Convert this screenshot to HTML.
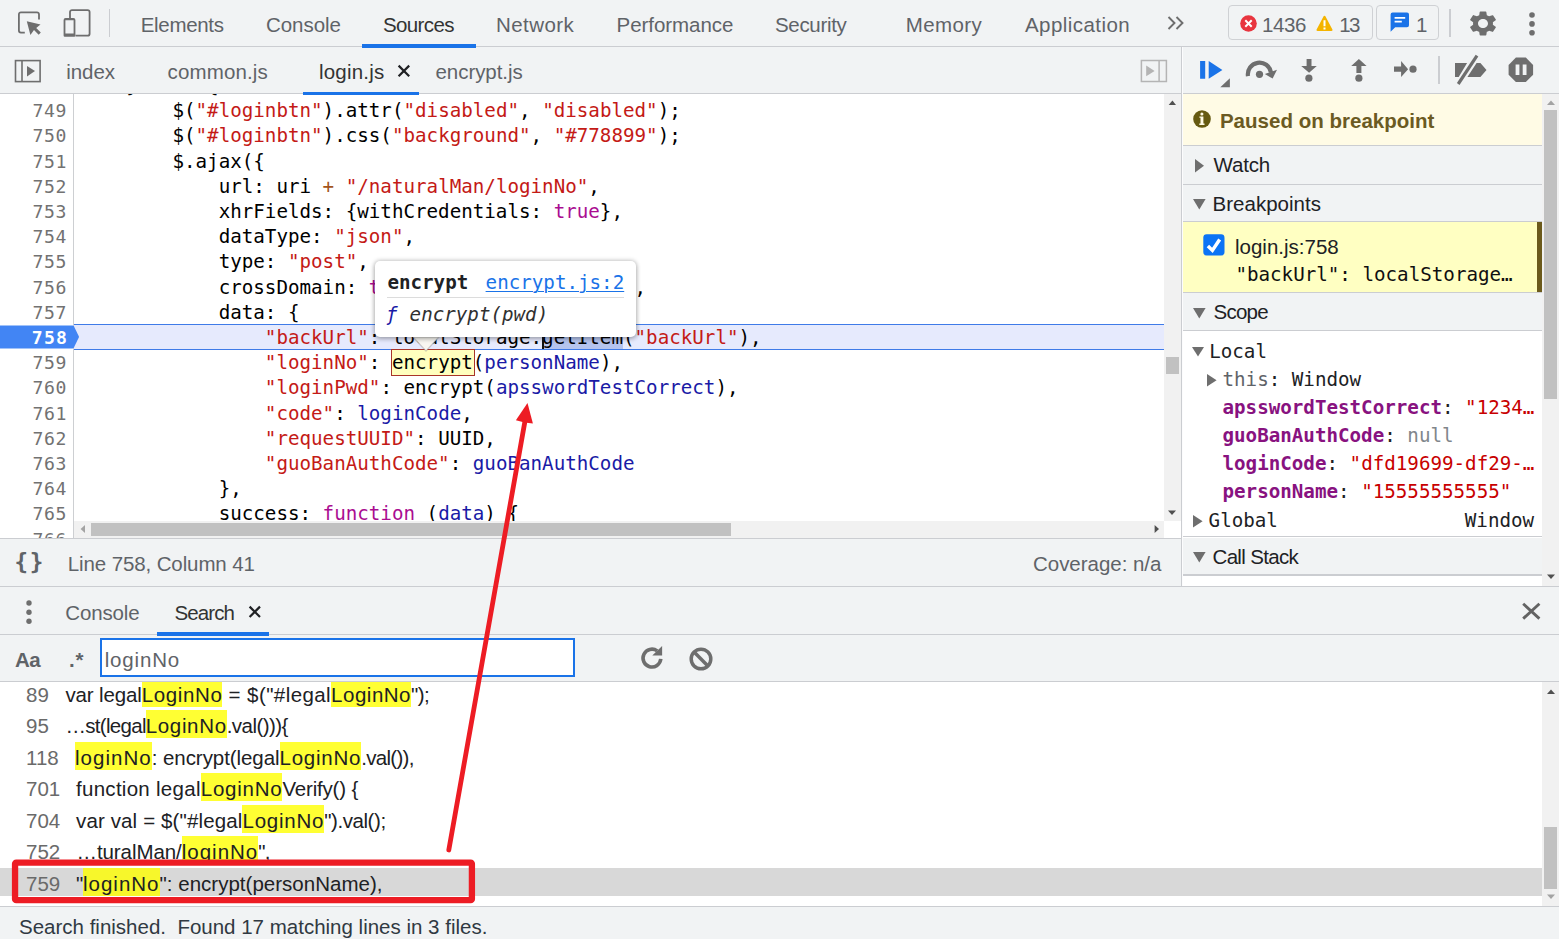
<!DOCTYPE html>
<html lang="en">
<head>
<meta charset="utf-8">
<title>DevTools - Sources</title>
<style>
*{box-sizing:border-box;margin:0;padding:0}
html,body{width:1559px;height:939px;overflow:hidden;background:#fff}
body{position:relative;font-family:"Liberation Sans","DejaVu Sans",sans-serif;font-size:20.5px;color:#303942;-webkit-font-smoothing:antialiased}
.abs{position:absolute}
.bar{position:absolute;background:#f1f3f4}
.hl{position:absolute;background:#cbcdd1}
.t{position:absolute;white-space:pre;line-height:24px;height:24px}
.mono{font-family:"DejaVu Sans Mono","Liberation Mono",monospace;font-size:19.19px}
svg{position:absolute;overflow:visible}

/* ---------- top toolbar ---------- */
#top{left:0;top:0;width:1559px;height:46px}
#top .t{top:12.9px;color:#5f6368}
#top .sel{color:#333}
.uline{position:absolute;background:#1a73e8;height:3.4px;z-index:5}
.badge{position:absolute;top:5px;height:35px;border:1px solid #cfd1d4;border-radius:4px;background:#f1f3f4}

/* ---------- file tabs ---------- */
#ftabs{left:0;top:47px;width:1181px;height:46px}
#ftabs .t{top:13.3px;color:#5f6368}
#ftabs .sel{color:#333}

/* ---------- debugger toolbar ---------- */
#dbg{left:1182px;top:47px;width:377px;height:46px}

/* ---------- code ---------- */
#code{position:absolute;left:0;top:94px;width:1164px;height:444px;background:#fff;overflow:hidden}
#gutter{position:absolute;left:0;top:0;width:74px;height:444px;background:#fff;border-right:1px solid #cdcfd2;z-index:3}
.ln{position:absolute;left:0;width:67.1px;font-size:18.1px;letter-spacing:.66px;text-align:right;color:#727272;height:25.2px;line-height:25.2px;white-space:pre}
.cl{position:absolute;left:33.8px;height:25.2px;line-height:25.2px;white-space:pre;color:#000}
.s{color:#c41a16}#side .s{color:#c80000}.k{color:#aa0d91}.v{color:#1a1aa6}.o{color:#a3541c}

.selx{background:linear-gradient(#b5c4ee,#b5c4ee) no-repeat 0 2px/100% 21px}
.hov{background:#ffffbe;outline:1.2px solid #a9352a;outline-offset:-1px;padding:2.2px 2.6px 1.5px .6px;margin:0 -2.6px 0 -.6px}
/* ---------- sidebar ---------- */
#side{position:absolute;left:1182px;top:94px;width:360px;height:492px;background:#fff;overflow:hidden}
.sec{position:absolute;left:0;width:360px;background:#f1f3f4;border-bottom:1px solid #cbcdd1}
.sec .t{left:31.5px;color:#202124}
.sc{position:absolute;white-space:pre;height:28px;line-height:28px}
.pn{color:#881280;font-weight:bold}

/* ---------- drawer ---------- */
.row{position:absolute;left:0;width:1542px;height:28px;line-height:28px;white-space:pre;color:#202124;overflow:hidden}
.row .n{position:absolute;left:0;top:1.8px;color:#6a6a6a}
.row .c{position:absolute;top:0}
.row .c span,.row mark{position:relative}
.row .c>*{line-height:31.6px}
mark{background:rgba(255,255,0,.8);color:inherit;display:inline-block;height:28px;vertical-align:top}
</style>
</head>
<body>

<!-- ======================= TOP TOOLBAR ======================= -->
<div class="bar" id="top">
  <!-- inspect element icon -->
  <svg width="30" height="30" viewBox="0 0 30 30" style="left:14px;top:8px">
    <path d="M25 11.5V6.4a2 2 0 0 0-2-2H6.9a2 2 0 0 0-2 2v16.2a2 2 0 0 0 2 2h3.9" fill="none" stroke="#6e6e6e" stroke-width="1.8"/>
    <path d="M12.8 13.2l13.7 3.3-4.3 3.4 4.6 4.7-2.1 2.2-4.7-4.8-3.6 4.9z" fill="#6e6e6e"/>
  </svg>
  <!-- device toolbar icon -->
  <svg width="30" height="30" viewBox="0 0 30 30" style="left:61px;top:8px">
    <path d="M9 10V4.1a2 2 0 0 1 2-2h15.6a2 2 0 0 1 2 2v21.6a2 2 0 0 1-2 2H14.5" fill="none" stroke="#6e6e6e" stroke-width="1.8"/>
    <path d="M4.6 10h7.8a2 2 0 0 1 2 2v15.5a1.2 1.2 0 0 1-1.2 1.2H3.8a1.2 1.2 0 0 1-1.2-1.2V12a2 2 0 0 1 2-2zM4.4 12.2v13.2h8.2V12.2z" fill="#6e6e6e" fill-rule="evenodd"/>
  </svg>
  <div class="abs" style="left:109px;top:9px;width:1px;height:28px;background:#cbcdd1"></div>

  <span class="t" style="left:140.75px;letter-spacing:-.315px">Elements</span>
  <span class="t" style="left:266px;letter-spacing:-.05px">Console</span>
  <span class="t sel" style="left:383px;letter-spacing:-.617px">Sources</span>
  <span class="t" style="left:496px;letter-spacing:.428px">Network</span>
  <span class="t" style="left:616.5px;letter-spacing:-.045px">Performance</span>
  <span class="t" style="left:775px;letter-spacing:-.329px">Security</span>
  <span class="t" style="left:905.75px;letter-spacing:.394px">Memory</span>
  <span class="t" style="left:1025px;letter-spacing:.436px">Application</span>
  <div class="uline" style="left:362px;top:44.2px;width:114.3px"></div>

  <!-- more tabs chevron -->
  <svg width="18" height="14" viewBox="0 0 18 14" style="left:1167px;top:16px">
    <path d="M1.5 1l6 6-6 6M9.5 1l6 6-6 6" fill="none" stroke="#6e6e6e" stroke-width="1.9"/>
  </svg>

  <!-- errors / warnings -->
  <div class="badge" style="left:1228px;width:145px"></div>
  <svg width="17" height="17" viewBox="0 0 17 17" style="left:1239.5px;top:14.5px">
    <circle cx="8.5" cy="8.5" r="8.3" fill="#e8353f"/>
    <path d="M5.3 5.3l6.4 6.4M11.7 5.3l-6.4 6.4" stroke="#fff" stroke-width="2" fill="none"/>
  </svg>
  <span class="t" style="left:1262.1px;letter-spacing:-.4px">1436</span>
  <svg width="17" height="17" viewBox="0 0 17 17" style="left:1316.3px;top:14.5px">
    <path d="M8.5 .8a1 1 0 0 1 .9.5l7 13.2a1 1 0 0 1-.9 1.5h-14a1 1 0 0 1-.9-1.5l7-13.2a1 1 0 0 1 .9-.5z" fill="#f4b400"/>
    <path d="M7.5 5.2h2v6h-2zM7.5 12.4h2v2h-2z" fill="#fff"/>
  </svg>
  <span class="t" style="left:1339.3px;letter-spacing:-1.8px">13</span>

  <!-- issues -->
  <div class="badge" style="left:1376px;width:63px"></div>
  <svg width="20" height="21" viewBox="0 0 20 21" style="left:1389.5px;top:12px">
    <path d="M2.6 .6h14.4a2 2 0 0 1 2 2v10.6a2 2 0 0 1-2 2H5.2L.6 19.8V2.6a2 2 0 0 1 2-2z" fill="#1a73e8"/>
    <path d="M4.6 5h10.6v1.8H4.6zM4.6 8.8h7.2v1.8H4.6z" fill="#fff"/>
  </svg>
  <span class="t" style="left:1415.9px">1</span>

  <div class="abs" style="left:1449px;top:9px;width:2px;height:28px;background:#cbcdd1"></div>
  <!-- settings gear -->
  <svg width="26" height="25" viewBox="2.6 2 18.8 20" preserveAspectRatio="none" style="left:1469.9px;top:10.6px">
    <path fill="#6e6e6e" d="M19.14 12.94c.04-.3.06-.61.06-.94 0-.32-.02-.64-.07-.94l2.03-1.58c.18-.14.23-.41.12-.61l-1.92-3.32c-.12-.22-.37-.29-.59-.22l-2.39.96c-.5-.38-1.03-.7-1.62-.94l-.36-2.54c-.04-.24-.24-.41-.48-.41h-3.84c-.24 0-.43.17-.47.41l-.36 2.54c-.59.24-1.13.57-1.62.94l-2.39-.96c-.22-.08-.47 0-.59.22L2.74 8.87c-.12.21-.08.47.12.61l2.03 1.58c-.05.3-.09.63-.09.94s.02.64.07.94l-2.03 1.58c-.18.14-.23.41-.12.61l1.92 3.32c.12.22.37.29.59.22l2.39-.96c.5.38 1.03.7 1.62.94l.36 2.54c.05.24.24.41.48.41h3.84c.24 0 .44-.17.47-.41l.36-2.54c.59-.24 1.13-.56 1.62-.94l2.39.96c.22.08.47 0 .59-.22l1.92-3.32c.12-.22.07-.47-.12-.61l-2.01-1.58zM12 15.6c-1.98 0-3.6-1.62-3.6-3.6s1.62-3.6 3.6-3.6 3.6 1.62 3.6 3.6-1.62 3.6-3.6 3.6z"/>
  </svg>
  <!-- kebab -->
  <svg width="8" height="26" viewBox="0 0 8 26" style="left:1528.4px;top:11px">
    <circle cx="4" cy="4" r="2.8" fill="#6e6e6e"/><circle cx="4" cy="12.9" r="2.8" fill="#6e6e6e"/><circle cx="4" cy="21.7" r="2.8" fill="#6e6e6e"/>
  </svg>
</div>
<div class="hl" style="left:0;top:46px;width:1559px;height:1px"></div>

<!-- ======================= FILE TABS ======================= -->
<div class="bar" id="ftabs">
  <!-- show navigator -->
  <svg width="28" height="24" viewBox="0 0 28 24" style="left:14px;top:11.6px">
    <rect x="1.5" y="1.6" width="24.6" height="21" fill="none" stroke="#6e6e6e" stroke-width="1.6"/>
    <path d="M8 1.6v21" stroke="#6e6e6e" stroke-width="1.6"/>
    <path d="M13 6.9l8 5.2-8 5.3z" fill="#6e6e6e"/>
  </svg>
  <span class="t" style="left:66.3px;letter-spacing:-.064px">index</span>
  <span class="t" style="left:167.5px;letter-spacing:.143px">common.js</span>
  <span class="t sel" style="left:319px;letter-spacing:.205px">login.js</span>
  <svg width="14" height="14" viewBox="0 0 14 14" style="left:397px;top:16.5px">
    <path d="M1.6 1.6l10.6 10.6M12.2 1.6L1.6 12.2" stroke="#202124" stroke-width="2.2" fill="none"/>
  </svg>
  <span class="t" style="left:435.5px;letter-spacing:-.053px">encrypt.js</span>
  <div class="uline" style="left:302.5px;top:44.6px;width:116.5px"></div>
  <!-- show debugger (collapsed) -->
  <svg width="28" height="24" viewBox="0 0 28 24" style="left:1140.2px;top:11.7px">
    <rect x="1.4" y="1.5" width="25" height="21" fill="none" stroke="#b4b4b4" stroke-width="1.5"/>
    <path d="M19.1 1.5v21" stroke="#b4b4b4" stroke-width="1.5"/>
    <path d="M6.2 6.5l8.4 5.4-8.4 5.3z" fill="#b4b4b4"/>
  </svg>
</div>
<div class="hl" style="left:0;top:93px;width:1559px;height:1px"></div>

<!-- ======================= DEBUGGER TOOLBAR ======================= -->
<div class="bar" id="dbg">
  <!-- resume -->
  <svg width="34" height="30" viewBox="0 0 34 30" style="left:17px;top:12px">
    <path d="M1.1 2.1h5.1v17.7H1.1zM9.7 2.1l13.7 8.8L9.7 19.8z" fill="#1a73e8"/>
    <path d="M30.9 19.3v8.9h-9.6z" fill="#6e6e6e"/>
  </svg>
  <!-- step over -->
  <svg width="34" height="22" viewBox="0 0 34 22" style="left:62px;top:12px">
    <path d="M4 17.2A11.6 11.6 0 0 1 27 13.4" fill="none" stroke="#6e6e6e" stroke-width="4.2"/>
    <path d="M33 10.8l-4.4 8.7-7.8-4.4z" fill="#6e6e6e"/>
    <circle cx="15.5" cy="15.3" r="3.6" fill="#6e6e6e"/>
  </svg>
  <!-- step into -->
  <svg width="18" height="26" viewBox="0 0 18 26" style="left:118px;top:11.4px">
    <path d="M6.6 1h4.9v7.1h5.3l-7.7 6.7L1.2 8.1h5.4z" fill="#6e6e6e"/>
    <circle cx="8.9" cy="20.2" r="3.6" fill="#6e6e6e"/>
  </svg>
  <!-- step out -->
  <svg width="18" height="26" viewBox="0 0 18 26" style="left:167.5px;top:11.4px">
    <path d="M8.9 1l7.7 7.1h-5.2v6.9H6.4V8.1H1.2z" fill="#6e6e6e"/>
    <circle cx="8.9" cy="20.2" r="3.6" fill="#6e6e6e"/>
  </svg>
  <!-- step -->
  <svg width="26" height="18" viewBox="0 0 26 18" style="left:211px;top:13px">
    <path d="M1 6.5h7.1V1.1l7 8.1-7 7.7v-5.1H1z" fill="#6e6e6e"/>
    <circle cx="20" cy="9.2" r="3.6" fill="#6e6e6e"/>
  </svg>
  <div class="abs" style="left:256px;top:9px;width:2px;height:28px;background:#cbcdd1"></div>
  <!-- deactivate breakpoints -->
  <svg width="36" height="32" viewBox="0 0 36 32" style="left:271px;top:7px">
    <path d="M2 8.9h12.1L5.7 22.9H2zM23.6 8.9h3.8l6.1 7-6.1 7H14.4z" fill="#6e6e6e"/>
    <path d="M5.2 30L24 1.7" stroke="#6e6e6e" stroke-width="3.2" fill="none"/>
  </svg>
  <!-- pause on exceptions -->
  <svg width="26" height="26" viewBox="0 0 26 26" style="left:325.5px;top:10px">
    <path d="M7.9 .6h9.9l7.3 7.3v9.9l-7.3 7.3H7.9L.6 17.8V7.9z" fill="#6e6e6e"/>
    <path d="M7.6 7.6h3.8v10.3H7.6zM14.7 7.6h3.8v10.3h-3.8z" fill="#f1f3f4"/>
  </svg>
</div>

<!-- ======================= CODE EDITOR ======================= -->
<div id="code" class="mono">
  <div class="abs" style="left:74px;top:230.2px;width:1090px;height:26.3px;background:#e6eafd;border-top:1.2px solid #3f7be8;border-bottom:1.2px solid #3f7be8"></div>
  <div class="cl" style="top:-21.04px">        } else {</div>
  <div class="cl" style="top:4.16px">            $(<span class="s">"#loginbtn"</span>).attr(<span class="s">"disabled"</span>, <span class="s">"disabled"</span>);</div>
  <div class="cl" style="top:29.36px">            $(<span class="s">"#loginbtn"</span>).css(<span class="s">"background"</span>, <span class="s">"#778899"</span>);</div>
  <div class="cl" style="top:54.56px">            $.ajax({</div>
  <div class="cl" style="top:79.76px">                url: uri <span class="o">+</span> <span class="s">"/naturalMan/loginNo"</span>,</div>
  <div class="cl" style="top:104.96px">                xhrFields: {withCredentials: <span class="k">true</span>},</div>
  <div class="cl" style="top:130.16px">                dataType: <span class="s">"json"</span>,</div>
  <div class="cl" style="top:155.36px">                type: <span class="s">"post"</span>,</div>
  <div class="cl" style="top:180.56px">                crossDomain: <span class="k">true</span> == !(document.all),</div>
  <div class="cl" style="top:205.76px">                data: {</div>
  <div class="cl" style="top:230.96px">                    <span class="s">"backUrl"</span>: localStorage.<span class="selx">getItem</span>(<span class="s">"backUrl"</span>),</div>
  <div class="cl" style="top:256.16px">                    <span class="s">"loginNo"</span>: <span class="hov">encrypt</span>(<span class="v">personName</span>),</div>
  <div class="cl" style="top:281.36px">                    <span class="s">"loginPwd"</span>: encrypt(<span class="v">apsswordTestCorrect</span>),</div>
  <div class="cl" style="top:306.56px">                    <span class="s">"code"</span>: <span class="v">loginCode</span>,</div>
  <div class="cl" style="top:331.76px">                    <span class="s">"requestUUID"</span>: UUID,</div>
  <div class="cl" style="top:356.96px">                    <span class="s">"guoBanAuthCode"</span>: <span class="v">guoBanAuthCode</span></div>
  <div class="cl" style="top:382.16px">                },</div>
  <div class="cl" style="top:407.36px">                success: <span class="k">function</span> (<span class="v">data</span>) {</div>
  <div class="cl" style="top:432.56px">                    <span class="k">if</span> (data.code == <span class="s">"0"</span>) {</div>
  <div id="gutter">
    <div class="ln" style="top:-21.04px">748</div>
    <div class="ln" style="top:4.16px">749</div>
    <div class="ln" style="top:29.36px">750</div>
    <div class="ln" style="top:54.56px">751</div>
    <div class="ln" style="top:79.76px">752</div>
    <div class="ln" style="top:104.96px">753</div>
    <div class="ln" style="top:130.16px">754</div>
    <div class="ln" style="top:155.36px">755</div>
    <div class="ln" style="top:180.56px">756</div>
    <div class="ln" style="top:205.76px">757</div>
    <div class="ln" style="top:256.16px">759</div>
    <div class="ln" style="top:281.36px">760</div>
    <div class="ln" style="top:306.56px">761</div>
    <div class="ln" style="top:331.76px">762</div>
    <div class="ln" style="top:356.96px">763</div>
    <div class="ln" style="top:382.16px">764</div>
    <div class="ln" style="top:407.36px">765</div>
    <div class="ln" style="top:432.56px">766</div>
    <svg width="80" height="24" viewBox="0 0 80 24" style="left:0;top:231.2px"><path d="M0 .4h72.6a1.5 1.5 0 0 1 1.2.7l5 10.2a1.5 1.5 0 0 1 0 1.2l-5 10.2a1.5 1.5 0 0 1-1.2.7H0z" fill="#4285f4"/></svg>
    <div class="ln" style="top:230.96px;color:#fff;font-weight:bold;left:1.2px;letter-spacing:1.3px">758</div>
  </div>
  <div class="abs" style="left:74px;top:427px;width:1090px;height:17px;background:#f1f1f1;z-index:4">
    <svg width="6" height="9" viewBox="0 0 6 9" style="left:6px;top:4.4px"><path d="M5 0v8L.6 4z" fill="#a3a3a3"/></svg>
    <div class="abs" style="left:17px;top:2px;width:640px;height:13px;background:#c1c1c1"></div>
    <svg width="6" height="9" viewBox="0 0 6 9" style="left:1079.5px;top:4.4px"><path d="M.6 0v8L5 4z" fill="#505050"/></svg>
  </div>
</div>
<div class="abs" style="left:1164px;top:94px;width:17px;height:427px;background:#f1f1f1">
  <svg width="9" height="6" viewBox="0 0 9 6" style="left:4.4px;top:6.4px"><path d="M.7 5h7.3L4.4 .6z" fill="#505050"/></svg>
  <div class="abs" style="left:2px;top:263px;width:13px;height:16.5px;background:#c1c1c1"></div>
  <svg width="9" height="6" viewBox="0 0 9 6" style="left:4.4px;top:415.6px"><path d="M0 .6h8L4 5z" fill="#505050"/></svg>
</div>

<!-- ======================= HOVER POPOVER ======================= -->
<div class="abs" style="left:542.4px;top:327px;width:1.2px;height:22px;background:#111;z-index:6"></div>
<svg width="30" height="16" viewBox="0 0 30 16" style="left:411.4px;top:335.6px;z-index:21">
  <path d="M2 1h26L15 15z" fill="#f8f6f1" stroke="rgba(110,110,110,.30)" stroke-width="1.2"/>
</svg>
<div id="pop" class="abs mono" style="left:375px;top:260.6px;width:261px;height:76px;background:#fff;border-radius:5px;box-shadow:0 0 4px 1px rgba(0,0,0,.18),0 2px 5px rgba(0,0,0,.22);z-index:22">
  <span class="t mono" style="left:12.4px;top:10.8px;font-weight:bold;color:#202124">encrypt</span>
  <span class="t mono" style="left:110.6px;top:10.8px;color:#1a73e8;text-decoration:underline;text-decoration-thickness:1.4px;text-underline-offset:2.4px">encrypt.js:2</span>
  <div class="abs" style="left:12px;top:36px;width:237px;height:1px;background:#dcdcdc"></div>
  <span class="t mono" style="left:11px;top:42.5px;font-style:italic;color:#1a1aa6">ƒ</span>
  <span class="t mono" style="left:34.6px;top:42.5px;font-style:italic;color:#303030">encrypt(pwd)</span>
</div>
<!-- ======================= SIDEBAR ======================= -->
<div class="hl" style="left:1181px;top:47px;width:1px;height:539px;z-index:7"></div>
<div class="abs" style="left:1182px;top:47px;width:1px;height:539px;background:#fcfcfd;z-index:7"></div>
<div id="side">
  <!-- paused banner -->
  <div class="abs" style="left:0;top:0;width:360px;height:52px;background:#fffbe5;border-bottom:1px solid #cbcdd1">
    <svg width="18" height="18" viewBox="0 0 18 18" style="left:11.2px;top:16.4px">
      <circle cx="9" cy="9" r="8.8" fill="#665a10"/>
      <circle cx="8.9" cy="4" r="1.55" fill="#fffbe5"/><path d="M6.4 6.4h4v7.2h1.1v1.4H6.3v-1.4h1.2V7.7H6.4z" fill="#fffbe5"/>
    </svg>
    <span class="t" style="left:37.9px;top:14.9px;font-weight:bold;color:#6b5a22;letter-spacing:.02px">Paused on breakpoint</span>
  </div>
  <!-- Watch -->
  <div class="sec" style="top:52px;height:39px">
    <svg width="10" height="14" viewBox="0 0 10 14" style="left:13.2px;top:12.6px"><path d="M0 0l9 6.7-9 6.7z" fill="#6e6e6e"/></svg>
    <span class="t" style="top:7.4px;letter-spacing:-.17px">Watch</span>
  </div>
  <!-- Breakpoints -->
  <div class="sec" style="top:91px;height:37px">
    <svg width="14" height="11" viewBox="0 0 14 11" style="left:11.4px;top:14.2px"><path d="M0 0h12.6L6.3 10.4z" fill="#6e6e6e"/></svg>
    <span class="t" style="left:30.5px;top:7.4px;letter-spacing:.024px">Breakpoints</span>
  </div>
  <div class="abs" style="left:0;top:128px;width:360px;height:71px;background:#ffffc2;border-bottom:1px solid #cbcdd1">
    <div class="abs" style="left:354.5px;top:0;width:5.5px;height:70px;background:#6b5a1c"></div>
    <svg width="22" height="22" viewBox="0 0 22 22" style="left:21.3px;top:11.8px">
      <rect x=".3" y=".3" width="21.2" height="21.2" rx="3.4" fill="#0b74f5"/>
      <path d="M4.9 12.1l4.5 4.3 7.3-10.9" fill="none" stroke="#fff" stroke-width="3.5"/>
    </svg>
    <span class="t" style="left:53px;top:12.6px;color:#202124">login.js:758</span>
    <span class="t mono" style="left:53.4px;top:41.1px;color:#101010">"backUrl": localStorage…</span>
  </div>
  <!-- Scope -->
  <div class="sec" style="top:199px;height:38px">
    <svg width="14" height="11" viewBox="0 0 14 11" style="left:11.4px;top:14.6px"><path d="M0 0h12.6L6.3 10.4z" fill="#6e6e6e"/></svg>
    <span class="t" style="top:7.2px;letter-spacing:-.744px">Scope</span>
  </div>
  <div class="mono abs" style="left:0;top:237px;width:360px;height:206px;background:#fff;border-bottom:1px solid #cbcdd1;color:#202124">
    <svg width="13" height="10" viewBox="0 0 13 10" style="left:10px;top:16.3px"><path d="M0 0h12L6 9.4z" fill="#6e6e6e"/></svg>
    <span class="sc" style="left:27.2px;top:6.6px">Local</span>
    <svg width="10" height="13" viewBox="0 0 10 13" style="left:25.2px;top:43.3px"><path d="M0 0l9.6 6.2L0 12.5z" fill="#6e6e6e"/></svg>
    <span class="sc" style="left:40.5px;top:35.1px"><span style="color:#5f6368">this</span>: Window</span>
    <span class="sc" style="left:40.5px;top:63.1px"><span class="pn">apsswordTestCorrect</span>: <span class="s">"1234…</span></span>
    <span class="sc" style="left:40.5px;top:91.1px"><span class="pn">guoBanAuthCode</span>: <span style="color:#80868b">null</span></span>
    <span class="sc" style="left:40.5px;top:119.3px"><span class="pn">loginCode</span>: <span class="s">"dfd19699-df29-…</span></span>
    <span class="sc" style="left:40.5px;top:147.0px"><span class="pn">personName</span>: <span class="s">"15555555555"</span></span>
    <svg width="10" height="13" viewBox="0 0 10 13" style="left:11.2px;top:183.7px"><path d="M0 0l9.6 6.2L0 12.5z" fill="#6e6e6e"/></svg>
    <span class="sc" style="left:26.6px;top:175.6px">Global</span>
    <span class="sc" style="left:282.8px;top:175.6px">Window</span>
  </div>
  <!-- Call Stack -->
  <div class="sec" style="top:444px;height:38px;border-bottom:2px solid #cbcdd1">
    <svg width="14" height="11" viewBox="0 0 14 11" style="left:11.4px;top:14.4px"><path d="M0 0h12.6L6.3 10.4z" fill="#6e6e6e"/></svg>
    <span class="t" style="left:30.5px;top:7px;letter-spacing:-.67px">Call Stack</span>
  </div>
</div>
<!-- sidebar scrollbar -->
<div class="abs" style="left:1542px;top:94px;width:17px;height:492px;background:#f1f1f1">
  <svg width="9" height="6" viewBox="0 0 9 6" style="left:4.6px;top:5.6px"><path d="M0 5h8L4 .6z" fill="#a3a3a3"/></svg>
  <div class="abs" style="left:2px;top:16px;width:13px;height:289px;background:#c1c1c1"></div>
  <svg width="9" height="6" viewBox="0 0 9 6" style="left:4.6px;top:479.6px"><path d="M0 .6h8L4 5z" fill="#505050"/></svg>
</div>

<!-- ======================= STATUS BAR ======================= -->
<div class="bar" id="status" style="left:0;top:539px;width:1181px;height:47px">
  <span class="t mono" style="left:14.6px;top:10.6px;font-weight:bold;color:#5f6368;font-size:22.5px;letter-spacing:1.6px">{}</span>
  <span class="t" style="left:67.75px;top:13.2px;color:#5f6368;letter-spacing:-.113px">Line 758, Column 41</span>
  <span class="t" style="left:1033px;top:13.2px;color:#5f6368;letter-spacing:-.03px">Coverage: n/a</span>
</div>
<div class="hl" style="left:0;top:538px;width:1181px;height:1px"></div>

<!-- ======================= DRAWER ======================= -->
<div class="hl" style="left:0;top:586px;width:1559px;height:1px"></div>
<div class="bar" id="dtabs" style="left:0;top:587px;width:1559px;height:47px">
  <svg width="8" height="26" viewBox="0 0 8 26" style="left:25.2px;top:11.5px">
    <circle cx="4" cy="4" r="2.7" fill="#6e6e6e"/><circle cx="4" cy="13.2" r="2.7" fill="#6e6e6e"/><circle cx="4" cy="22.3" r="2.7" fill="#6e6e6e"/>
  </svg>
  <span class="t" style="left:65.25px;top:13.9px;color:#5f6368;letter-spacing:-.135px">Console</span>
  <span class="t" style="left:174.5px;top:13.9px;color:#333;letter-spacing:-.91px">Search</span>
  <svg width="14" height="14" viewBox="0 0 14 14" style="left:247.8px;top:17.6px">
    <path d="M1.6 1.6l10.4 10.4M12 1.6L1.6 12" stroke="#202124" stroke-width="2.2" fill="none"/>
  </svg>
  <div class="uline" style="left:157px;top:45px;width:112.3px;height:3.5px;z-index:2"></div>
  <svg width="20" height="18" viewBox="0 0 20 18" style="left:1521px;top:15px">
    <path d="M2.2 1.8l16.2 14.8M18.4 1.8L2.2 16.6" stroke="#636363" stroke-width="2.9" fill="none"/>
  </svg>
</div>
<div class="hl" style="left:0;top:634px;width:1559px;height:1px"></div>
<div class="bar" id="sbar" style="left:0;top:635px;width:1559px;height:46px">
  <span class="t" style="left:15px;top:13px;font-weight:bold;color:#5f6368;letter-spacing:-.6px">Aa</span>
  <span class="t" style="left:69px;top:13px;font-weight:bold;color:#5f6368;letter-spacing:.8px">.*</span>
  <div class="abs" style="left:100px;top:3.3px;width:475px;height:38.5px;background:#fff;border:2px solid #1a73e8"></div>
  <span class="t" style="left:104.75px;top:12.9px;color:#5f6368;letter-spacing:.814px">loginNo</span>
  <svg width="26" height="26" viewBox="0 0 26 26" style="left:638.5px;top:10px">
    <path d="M21.8 13.9a8.9 8.9 0 1 1-3.6-8" fill="none" stroke="#6e6e6e" stroke-width="3.6"/>
    <path d="M23.1 .9v9.7h-9.8z" fill="#6e6e6e"/>
  </svg>
  <svg width="26" height="26" viewBox="0 0 26 26" style="left:688.4px;top:10.9px">
    <circle cx="13" cy="13" r="9.8" fill="none" stroke="#6e6e6e" stroke-width="3.5"/>
    <path d="M6.1 6.1l13.8 13.8" stroke="#6e6e6e" stroke-width="3.5"/>
  </svg>
</div>
<div class="hl" style="left:0;top:681px;width:1559px;height:1px"></div>
<div id="results" class="abs" style="left:0;top:682px;width:1559px;height:224px;background:#fff;overflow:hidden">
  <div class="row" style="top:-3.25px"><span class="n" style="left:26px">89</span><span class="c" style="left:65.5px"><span style="letter-spacing:-0.139px">var legal</span><mark style="letter-spacing:0.621px">LoginNo</mark><span style="letter-spacing:0.417px"> = $("#legal</span><mark style="letter-spacing:0.514px">LoginNo</mark><span style="letter-spacing:-0.6px">");</span></span></div>
  <div class="row" style="top:28.25px"><span class="n" style="left:26px">95</span><span class="c" style="left:65.5px"><span style="letter-spacing:-0.706px">…st(legal</span><mark style="letter-spacing:0.657px">LoginNo</mark><span style="letter-spacing:-0.539px">.val())){</span></span></div>
  <div class="row" style="top:59.75px"><span class="n" style="left:26px">118</span><span class="c" style="left:75px"><mark style="letter-spacing:1.036px">loginNo</mark><span style="letter-spacing:-0.07px">: encrypt(legal</span><mark style="letter-spacing:0.764px">LoginNo</mark><span style="letter-spacing:-0.7px">.val()),</span></span></div>
  <div class="row" style="top:91.25px"><span class="n" style="left:26px">701</span><span class="c" style="left:76.0px"><span style="letter-spacing:0.282px">function legal</span><mark style="letter-spacing:0.764px">LoginNo</mark><span style="letter-spacing:-0.19px">Verify() {</span></span></div>
  <div class="row" style="top:122.75px"><span class="n" style="left:26px">704</span><span class="c" style="left:76.0px"><span style="letter-spacing:0.132px">var val = $("#legal</span><mark style="letter-spacing:0.764px">LoginNo</mark><span style="letter-spacing:-0.433px">").val();</span></span></div>
  <div class="row" style="top:154.25px"><span class="n" style="left:26px">752</span><span class="c" style="left:76.5px"><span style="letter-spacing:-0.075px">…turalMan/</span><mark style="letter-spacing:1.0px">loginNo</mark><span style="letter-spacing:-0.825px">",</span></span></div>
  <div class="row" style="top:185.75px;background:#d8d8d8"><span class="n" style="left:26px">759</span><span class="c" style="left:76.0px"><span style="letter-spacing:-0.3px">"</span><mark style="letter-spacing:1.0px">loginNo</mark><span style="letter-spacing:0.017px">": encrypt(personName),</span></span></div>
  <div class="abs" style="left:1542px;top:0;width:17px;height:224px;background:#f1f1f1">
    <svg width="9" height="6" viewBox="0 0 9 6" style="left:4.6px;top:6.6px"><path d="M0 5h8L4 .6z" fill="#505050"/></svg>
    <div class="abs" style="left:2px;top:145px;width:13px;height:62px;background:#c1c1c1"></div>
    <svg width="9" height="6" viewBox="0 0 9 6" style="left:4.6px;top:212px"><path d="M0 .6h8L4 5z" fill="#a3a3a3"/></svg>
  </div>
</div>
<div class="hl" style="left:0;top:906px;width:1559px;height:1px"></div>
<div class="bar" id="sstat" style="left:0;top:907px;width:1559px;height:32px">
  <span class="t" style="left:19px;top:7.6px;color:#303942">Search finished.  Found 17 matching lines in 3 files.</span>
</div>

<!-- ======================= ANNOTATIONS ======================= -->
<svg id="anno" width="1559" height="939" style="left:0;top:0;z-index:50;pointer-events:none">
  <rect x="15.05" y="862.6" width="456.85" height="37.5" rx="1.2" fill="none" stroke="#ed1c24" stroke-width="6.3"/>
  <path d="M448.8 850L525 421" stroke="#ed1c24" stroke-width="4.8" stroke-linecap="round" fill="none"/>
  <path d="M527.5 403L515.9 420.2 524.6 422.6 532.9 423.6z" fill="#ed1c24"/>
</svg>

</body>
</html>
